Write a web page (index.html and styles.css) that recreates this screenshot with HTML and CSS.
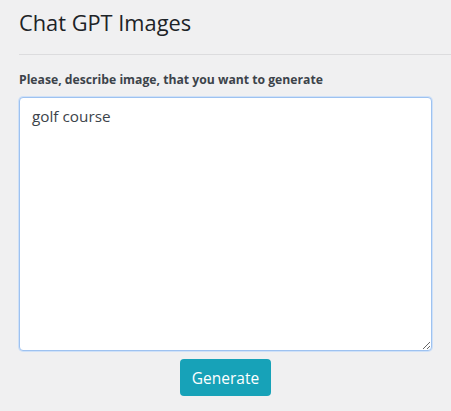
FILE: index.html
```html
<!DOCTYPE html>
<html>
<head>
<meta charset="utf-8">
<link rel="stylesheet" href="styles.css">
</head>
<body>
<div class="page">
  <h1 class="title">Chat GPT Images</h1>
  <hr class="divider">
  <form class="form">
    <label class="label" for="prompt">Please, describe image, that you want to generate</label>
    <textarea id="prompt" class="prompt">golf course</textarea>
    <div class="actions">
      <button type="button" class="btn">Generate</button>
    </div>
  </form>
</div>
</body>
</html>
```
FILE: styles.css
```css
html, body {
  margin: 0;
  padding: 0;
  background: #f0f0f1;
}
body {
  font-family: "Open Sans", "Noto Sans", sans-serif;
  color: #1d2327;
}
.page {
  padding: 8px 0 0 19px;
}
.title {
  margin: 0;
  font-size: 21.8px;
  font-weight: 400;
  line-height: 30px;
  color: #1d2327;
}
.divider {
  margin: 16px 0 0 0;
  border: 0;
  border-top: 1px solid #dcdcde;
  height: 0;
}
.form {
  display: flex;
  flex-direction: column;
  padding-right: 19px;
}
.label {
  margin-top: 17px;
  font-size: 12.2px;
  font-weight: 700;
  line-height: 16px;
  color: #3c434a;
}
.prompt {
  margin-top: 9px;
  box-sizing: border-box;
  width: 100%;
  height: 254px;
  padding: 8px 12px;
  font-family: "Open Sans", "Noto Sans", sans-serif;
  font-size: 15.3px;
  line-height: 20px;
  color: #3c434a;
  background: #fff;
  border: 1px solid #9ec2f0;
  border-radius: 4px;
  box-shadow: 0 0 0 1px #cfe1f8;
  outline: none;
}
.actions {
  display: flex;
  justify-content: center;
  margin-top: 8px;
}
.btn {
  width: 91px;
  height: 37px;
  border: 0;
  border-radius: 4px;
  background: #17a2b8;
  color: #fff;
  font-family: "Open Sans", "Noto Sans", sans-serif;
  font-size: 15.5px;
  cursor: pointer;
}
```
